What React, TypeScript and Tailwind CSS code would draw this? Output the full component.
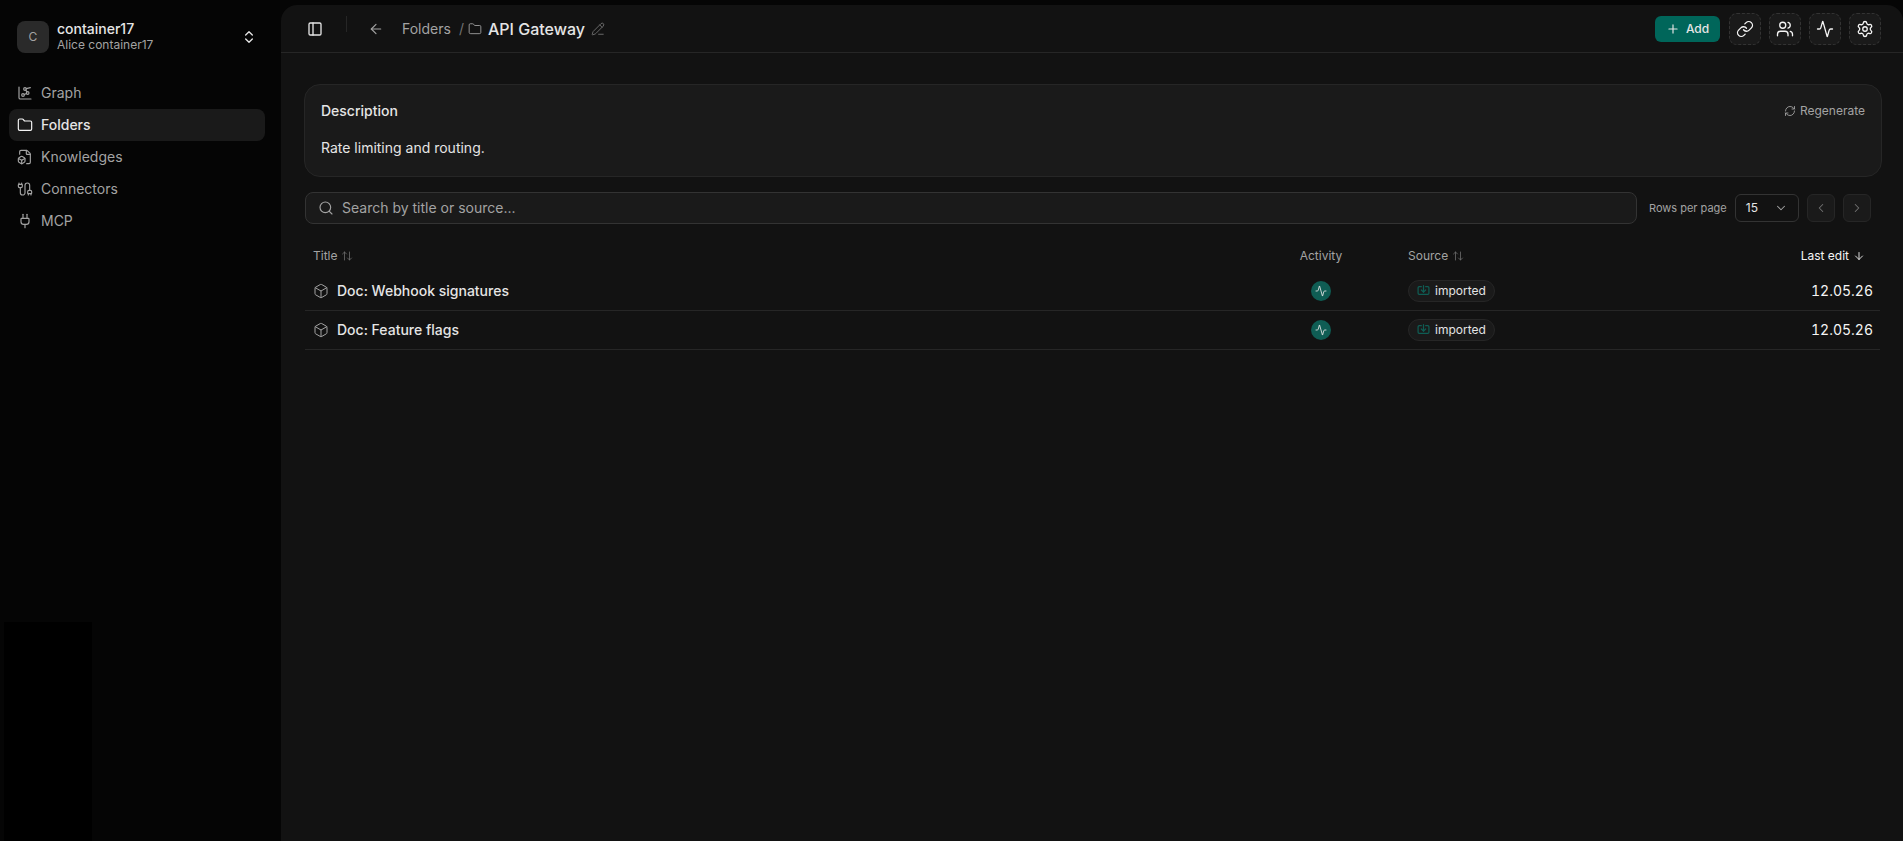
import React from "react";
import {
  Activity,
  ArrowDown,
  ArrowLeft,
  ArrowUpDown,
  Box,
  Cable,
  ChartNetwork,
  ChevronDown,
  ChevronLeft,
  ChevronRight,
  ChevronsUpDown,
  FileBox,
  Folder,
  Import,
  Link,
  PanelLeft,
  PencilLine,
  Plug,
  Plus,
  RefreshCw,
  Search,
  Settings,
  Users,
} from "lucide-react";

const navItems = [
  { label: "Graph", icon: ChartNetwork },
  { label: "Folders", icon: Folder, active: true },
  { label: "Knowledges", icon: FileBox },
  { label: "Connectors", icon: Cable },
  { label: "MCP", icon: Plug },
];

const rows = ["Doc: Webhook signatures", "Doc: Feature flags"];

const Sidebar: React.FC = () => (
  <aside className="w-[281px] shrink-0 pl-[9px] pr-4 pt-[21px]">
    <div className="flex items-center h-8 pl-2 pr-2">
      <div className="flex size-8 items-center justify-center rounded-lg bg-[#2a2a2a] text-xs text-[#a3a3a3]">C</div>
      <div className="ml-2 flex-1 leading-none">
        <div className="text-sm leading-4 font-medium text-[#e5e5e5]">container17</div>
        <div className="text-xs leading-4 text-[#a3a3a3]">Alice container17</div>
      </div>
      <ChevronsUpDown size={16} strokeWidth={2} className="text-[#e5e5e5]" />
    </div>
    <nav className="mt-[24px] flex flex-col">
      {navItems.map((item) => (
        <div
          key={item.label}
          className={`flex h-8 w-[256px] items-center gap-2 rounded-lg px-2 text-sm ${
            item.active ? "bg-[#1a1a1a] text-[#e5e5e5] font-medium" : "text-[#a3a3a3]"
          }`}
        >
          <item.icon size={16} strokeWidth={1.75} className={item.active ? "text-[#f5f5f5]" : "text-[#a3a3a3]"} />
          {item.label}
        </div>
      ))}
    </nav>
  </aside>
);

const IconButton: React.FC<{ icon: React.ElementType }> = ({ icon: Icon }) => (
  <button className="flex size-8 items-center justify-center rounded-lg border border-dashed border-[#333] bg-[#1a1a1a] text-[#f5f5f5]">
    <Icon size={18} strokeWidth={1.75} />
  </button>
);

const Header: React.FC = () => (
  <header className="flex h-[48px] items-center border-b border-[#262626] pl-[26px] pr-[22px]">
    <PanelLeft size={16} strokeWidth={2} className="text-[#e5e5e5]" />
    <div className="ml-[23px] mb-[9px] h-4 w-px bg-[#262626]" />
    <ArrowLeft size={16} strokeWidth={1.75} className="ml-[21px] text-[#a3a3a3]" />
    <span className="ml-[18px] text-sm text-[#a3a3a3]">Folders</span>
    <span className="ml-2 text-sm text-[#737373]">/</span>
    <Folder size={14} strokeWidth={1.5} className="ml-1 text-[#a3a3a3]" />
    <span className="ml-[6px] text-base font-medium text-[#e5e5e5]">API Gateway</span>
    <PencilLine size={14} strokeWidth={1.5} className="ml-[6px] text-[#737373]" />
    <div className="ml-auto flex items-center gap-2">
      <button className="mr-px flex h-[26px] w-[65px] items-center justify-center gap-[6px] rounded-md bg-[#00665a] text-xs font-medium text-[#e5e5e5]">
        <Plus size={14} strokeWidth={2} />
        Add
      </button>
      <IconButton icon={Link} />
      <IconButton icon={Users} />
      <IconButton icon={Activity} />
      <IconButton icon={Settings} />
    </div>
  </header>
);

const HeadCell: React.FC<{ label: string }> = ({ label }) => (
  <span className="flex items-center gap-1 text-xs text-[#a3a3a3]">
    {label}
    <ArrowUpDown size={12} strokeWidth={1.5} className="text-[#737373]" />
  </span>
);

const App: React.FC = () => (
  <div className="relative flex h-[841px] overflow-hidden bg-[#050505] font-['Inter',sans-serif]">
    <Sidebar />
    <main className="mt-[5px] flex-1 rounded-tl-[16px] rounded-tr-[16px] bg-[#121212]">
      <Header />
      <div className="pl-[23px] pr-[21px] pt-[31px]">
        <section className="h-[93px] rounded-2xl border border-[#262626] bg-[#1a1a1a] px-4 pt-4">
          <div className="flex items-center justify-between">
            <span className="text-sm font-medium text-[#e5e5e5]">Description</span>
            <span className="flex items-center gap-1 text-xs text-[#a3a3a3]">
              <RefreshCw size={12} strokeWidth={1.75} />
              Regenerate
            </span>
          </div>
          <p className="mt-[17px] text-sm text-[#e5e5e5]">Rate limiting and routing.</p>
        </section>

        <div className="mt-[15px] flex items-center">
          <div className="ml-px flex h-8 w-[1332px] shrink-0 items-center gap-2 rounded-lg border border-[#333] bg-[#1a1a1a] pl-3 text-sm text-[#a3a3a3]">
            <Search size={16} strokeWidth={1.75} />
            Search by title or source...
          </div>
          <span className="ml-[12px] text-[11px] text-[#a3a3a3]">Rows per page</span>
          <div className="ml-2 flex h-7 w-[64px] items-center justify-between rounded-md border border-[#333] px-[10px] text-xs text-[#e5e5e5]">
            15
            <ChevronDown size={14} strokeWidth={1.75} className="text-[#a3a3a3]" />
          </div>
          <button className="ml-[8px] flex size-7 items-center justify-center rounded-md border border-[#262626] bg-[#1a1a1a] text-[#737373]">
            <ChevronLeft size={14} strokeWidth={1.75} />
          </button>
          <button className="ml-[8px] flex size-7 items-center justify-center rounded-md border border-[#262626] bg-[#1a1a1a] text-[#737373]">
            <ChevronRight size={14} strokeWidth={1.75} />
          </button>
        </div>

        <div className="mt-4 pl-px pr-[2px]">
          <table className="w-full table-fixed">
            <thead>
              <tr className="h-[32px]">
                <th className="pl-2 text-left font-normal"><HeadCell label="Title" /></th>
                <th className="w-[108px] text-center text-xs font-normal text-[#a3a3a3]">Activity</th>
                <th className="w-[385px] pl-[33px] text-left font-normal"><HeadCell label="Source" /></th>
                <th className="w-[120px] pr-[15px] text-right font-normal">
                  <span className="flex items-center justify-end gap-1 text-xs text-[#f5f5f5]">
                    Last edit
                    <ArrowDown size={12} strokeWidth={1.75} />
                  </span>
                </th>
              </tr>
            </thead>
            <tbody>
              {rows.map((row, i) => (
                <tr key={row} className={`${i === 0 ? "h-[38px]" : "h-[39px]"} border-b border-[#262626]`}>
                  <td className="pl-2">
                    <span className="flex items-center gap-2 text-sm font-medium text-[#e5e5e5]">
                      <Box size={16} strokeWidth={1.5} className="text-[#a3a3a3]" />
                      {row}
                    </span>
                  </td>
                  <td>
                    <span className="mx-auto flex size-5 items-center justify-center rounded-full bg-[#0f5d54] text-[#e5e5e5]">
                      <Activity size={12} strokeWidth={1.75} />
                    </span>
                  </td>
                  <td className="pl-[33px]">
                    <span className="flex h-[22px] w-fit items-center gap-[5px] rounded-full border border-[#262626] bg-[#1a1a1a] pl-2 pr-2 text-xs text-[#e5e5e5]">
                      <Import size={13} strokeWidth={2.25} className="text-[#0f5d54]" />
                      imported
                    </span>
                  </td>
                  <td className="pr-[7px] text-right text-sm tabular-nums text-[#f5f5f5]">12.05.26</td>
                </tr>
              ))}
            </tbody>
          </table>
        </div>
      </div>
    </main>
    <div className="absolute bottom-0 left-[4px] h-[219px] w-[88px] bg-black" />
  </div>
);

export default App;
